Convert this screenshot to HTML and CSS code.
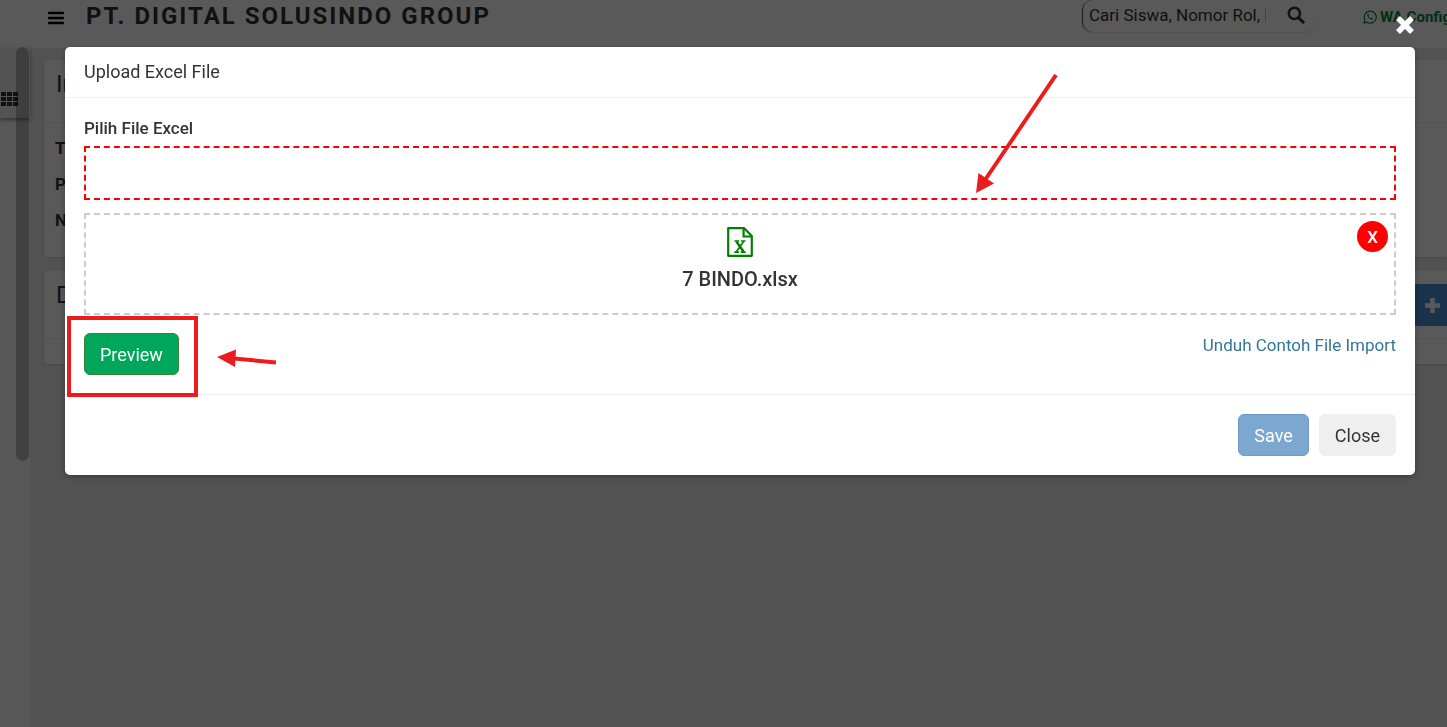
FILE: index.html
```html
<!DOCTYPE html>
<html lang="id">
<head>
    <meta charset="UTF-8">
    <meta name="viewport" content="width=device-width, initial-scale=1.0">
    <title>Upload Excel File</title>
    <link rel="stylesheet" href="styles.css">
</head>
<body>
    <header class="navbar">
        <button class="menu-toggle" type="button" aria-label="Menu">
            <svg width="16" height="14" viewBox="0 0 16 14"><path d="M1 2h14M1 7h14M1 12h14" stroke="#000" stroke-width="2.4" stroke-linecap="round"/></svg>
        </button>
        <h1 class="brand">PT. DIGITAL SOLUSINDO GROUP</h1>
        <form class="search">
            <input type="text" class="search-input" placeholder="Cari Siswa, Nomor Rol, Nama" aria-label="Cari Siswa">
            <button class="search-btn" type="button" aria-label="Cari">
                <svg width="18" height="18" viewBox="0 0 18 18"><circle cx="7.4" cy="7.4" r="5.6" fill="none" stroke="#333" stroke-width="2.5"/><path d="M11.6 11.6l4.6 4.6" stroke="#333" stroke-width="3" stroke-linecap="round"/></svg>
            </button>
        </form>
        <a class="wa-link" href="#">
            <svg width="14" height="14" viewBox="0 0 14 14" fill="none" stroke="currentColor"><path d="M1 13l.9-3.2A6 6 0 1 1 4.100 12.200z" stroke-width="1.200"/><path d="M4.600 3.900c-.9.8-.5 2.300.9 3.800 1.500 1.600 3.200 2.300 4.200 1.300.5-.6.3-.8-1-1.400l-.8.8c-1.200-.5-1.900-1.200-2.400-2.300l.6-.8c-.4-1.200-.7-1.700-1.500-1.400z" fill="currentColor" stroke="none"/></svg>
            WA Config
        </a>
    </header>

    <div class="wrapper">
        <aside class="sidebar">
            <div class="sidebar-top">
                <svg width="18" height="14" viewBox="0 0 18 14" fill="#333"><path d="M1 0h5v4H1zM7 0h5v4H7zM13 0h5v4h-5zM1 5h5v4H1zM7 5h5v4H7zM13 5h5v4h-5zM1 10h5v4H1zM7 10h5v4H7zM13 10h5v4h-5z"/></svg>
            </div>
            <div class="scroll-thumb"></div>
        </aside>
        <main class="content">
            <section class="panel">
                <h2 class="panel-title">In</h2>
                <div class="panel-body">
                    <p>T</p>
                    <p>P</p>
                    <p>N</p>
                </div>
            </section>
            <section class="panel">
                <div class="panel-head">
                    <h2 class="panel-title">D</h2>
                    <button class="btn-add" type="button" aria-label="Tambah">
                        <svg width="15" height="15" viewBox="0 0 15 15"><path d="M7.500 0v15M0 7.500h15" stroke="#fff" stroke-width="4.500"/></svg>
                    </button>
                </div>
                <div class="panel-foot"></div>
            </section>
        </main>
    </div>

    <div class="overlay">
        <div class="modal" role="dialog" aria-labelledby="modal-title">
            <button class="modal-x" type="button" aria-label="Tutup">
                <svg width="20" height="20" viewBox="0 0 20 20"><path d="M3 3l14 14M17 3L3 17" stroke="#fff" stroke-width="5.500"/></svg>
            </button>
            <div class="modal-header">
                <h3 id="modal-title">Upload Excel File</h3>
            </div>
            <div class="modal-body">
                <label class="file-label" for="file_excel">Pilih File Excel</label>
                <div class="dropzone">
                    <input type="file" id="file_excel" class="file-input" accept=".xlsx">
                </div>
                <div class="file-preview">
                    <svg width="26" height="30" viewBox="0 0 26 30" fill="none" stroke="green"><path d="M1.200 1.200h16L24.800 9v19.800H1.200z" stroke-width="2.200" stroke-linejoin="round"/><path d="M16.600 1.500v8h8" stroke-width="2.200"/><path d="M9.400 14.500l7.400 10.500" stroke-width="2.400"/><path d="M16.600 14.500L9.200 25" stroke-width="1.700"/><path d="M7.500 14h4.600M14 14h4.500M7.300 25.200h4.600M13.700 25.200h5" stroke-width="1.700"/></svg>
                    <span class="file-name">7 BINDO.xlsx</span>
                    <button class="file-remove" type="button">X</button>
                </div>
                <div class="actions">
                    <button class="btn btn-success" type="button">Preview</button>
                    <a class="sample-link" href="#">Unduh Contoh File Import</a>
                </div>
            </div>
            <div class="modal-footer">
                <button class="btn btn-primary" type="button" disabled>Save</button>
                <button class="btn btn-default" type="button">Close</button>
            </div>

            <!-- guide marks over the dialog -->
            <div class="mark-box"></div>
            <svg class="mark-arrow-left" width="60" height="20" viewBox="0 0 60 20"><path d="M17 10.500l42 4" stroke="#ec1c1c" stroke-width="4"/><path d="M0 9L19 1.500 18 19z" fill="#ec1c1c"/></svg>
            <svg class="mark-arrow-down" width="82" height="120" viewBox="0 0 82 120"><path d="M80 1L9 106" stroke="#ec1c1c" stroke-width="4"/><path d="M0 119L2.500 99 18 109.500z" fill="#ec1c1c"/></svg>
        </div>
    </div>
</body>
</html>
```

FILE: styles.css
```css
* {
    box-sizing: border-box;
}
body {
    margin: 0;
    min-height: 100vh;
    display: flex;
    flex-direction: column;
    font-family: Roboto, "Liberation Sans", sans-serif;
    font-size: 17px;
    color: #333;
    background-color: #ebebeb;
    overflow: hidden;
}
h1, h2, h3, p {
    margin: 0;
}
svg {
    display: block;
    flex: none;
}
button {
    font-family: inherit;
    padding: 0;
    border: none;
    background: none;
    cursor: pointer;
}

/* top bar */
.navbar {
    display: flex;
    align-items: flex-start;
    height: 48px;
    padding-left: 48px;
    background-color: #fff;
}
.menu-toggle {
    padding-top: 11px;
    margin-right: 22px;
}
.brand {
    flex: 1;
    font-size: 24px;
    font-weight: 700;
    line-height: 32px;
    letter-spacing: 2px;
    white-space: nowrap;
}
.search {
    display: flex;
    width: 238px;
    height: 32px;
    margin-right: 43px;
    border-radius: 0 0 16px 10px;
    box-shadow: 0 1px 1px #e4e4e4;
}
.search-input {
    width: 184px;
    height: 32px;
    padding: 0 0 2px 6px;
    border: none;
    border-left: 1px solid #555;
    border-radius: 10px 0 0 10px;
    background: transparent;
    font-family: inherit;
    font-size: 17px;
    color: #333;
}
.search-input::placeholder {
    color: #333;
}
.search-btn {
    display: flex;
    padding: 6px 0 0 21px;
}
.wa-link {
    display: flex;
    align-items: center;
    gap: 3px;
    width: 84px;
    height: 34px;
    font-size: 15px;
    font-weight: 700;
    white-space: nowrap;
    color: #00893a;
    text-decoration: none;
}

/* page behind the dialog */
.wrapper {
    flex: 1;
    display: flex;
}
.sidebar {
    position: relative;
    width: 30px;
    background-color: #f9f9f9;
}
.sidebar-top {
    height: 70px;
    padding-top: 44px;
    background-color: #eee;
    box-shadow: 0 2px 4px rgba(0, 0, 0, 0.4);
}
.scroll-thumb {
    position: absolute;
    top: -1px;
    right: 1px;
    width: 13px;
    height: 414px;
    border-radius: 7px;
    background-color: rgba(0, 0, 0, 0.25);
}
.content {
    flex: 1;
    padding: 12px 0 0 14px;
}
.panel {
    margin-bottom: 14px;
    border-radius: 4px 0 0 4px;
    background-color: #fff;
    box-shadow: 0 1px 3px rgba(0, 0, 0, 0.12);
}
.panel-title {
    height: 63px;
    padding: 10px 12px;
    font-size: 24px;
    font-weight: 400;
    line-height: 28px;
    border-bottom: 1px solid #eee;
}
.panel-body {
    padding: 7px 11px 19px;
    font-weight: 700;
    line-height: 36px;
}
.panel-head {
    display: flex;
    justify-content: space-between;
    height: 68px;
    border-bottom: 1px solid #eee;
}
.panel-head .panel-title {
    border: none;
}
.btn-add {
    display: flex;
    align-items: center;
    justify-content: flex-end;
    width: 48px;
    height: 42px;
    margin-top: 13px;
    padding-right: 7px;
    background-color: #4a90da;
}
.panel-foot {
    height: 25px;
}

/* dialog */
.overlay {
    position: fixed;
    inset: 0;
    padding: 47px 32px 0 65px;
    background-color: rgba(0, 0, 0, 0.65);
}
.modal {
    position: relative;
    background-color: #fff;
    border-radius: 5px;
    box-shadow: 0 2px 6px rgba(0, 0, 0, 0.3);
}
.modal-x {
    position: absolute;
    top: -32px;
    right: 0;
}
.modal-header {
    padding: 12px 19px 13px;
    border-bottom: 1px solid #f0f0f0;
}
.modal-header h3 {
    font-size: 18px;
    font-weight: 400;
    line-height: 25px;
}
.modal-body {
    padding: 18px 19px 19px;
}
.file-label {
    display: block;
    margin-bottom: 6px;
    font-size: 17px;
    font-weight: 500;
    line-height: 24px;
}
.dropzone {
    height: 54px;
    margin-bottom: 13px;
    border: 2px dashed #f00;
}
.file-input {
    display: block;
    width: 100%;
    height: 100%;
    opacity: 0;
}
.file-preview {
    position: relative;
    display: flex;
    flex-direction: column;
    align-items: center;
    gap: 8px;
    height: 102px;
    padding-top: 12px;
    margin-bottom: 18px;
    border: 2px dashed #ccc;
}
.file-name {
    font-size: 20px;
    font-weight: 500;
    line-height: 28px;
}
.file-remove {
    position: absolute;
    top: 6px;
    right: 6px;
    width: 31px;
    height: 31px;
    border-radius: 50%;
    background-color: #f00;
    color: #fff;
    font-size: 17px;
    font-weight: 500;
}
.actions {
    display: flex;
    justify-content: space-between;
    align-items: flex-start;
}
.sample-link {
    font-size: 17px;
    line-height: 24px;
    color: #337792;
    text-decoration: none;
}
.btn {
    height: 42px;
    padding: 0 15px;
    border: 1px solid transparent;
    border-radius: 6px;
    font-size: 18px;
}
.btn-success {
    background-color: #00a65a;
    border-color: #398439;
    color: #fff;
}
.btn-primary {
    background-color: #7ba7d0;
    border-color: #6f9cc6;
    color: #fff;
}
.btn-default {
    background-color: #efefef;
    color: #333;
}
.modal-footer {
    display: flex;
    justify-content: flex-end;
    gap: 10px;
    padding: 19px;
    border-top: 1px solid #f0f0f0;
}

/* guide marks */
.mark-box {
    position: absolute;
    top: 269px;
    left: 2px;
    width: 131px;
    height: 81px;
    border: 4px solid #ec1c1c;
}
.mark-arrow-left {
    position: absolute;
    top: 301px;
    left: 152px;
}
.mark-arrow-down {
    position: absolute;
    top: 27px;
    left: 911px;
}
```
